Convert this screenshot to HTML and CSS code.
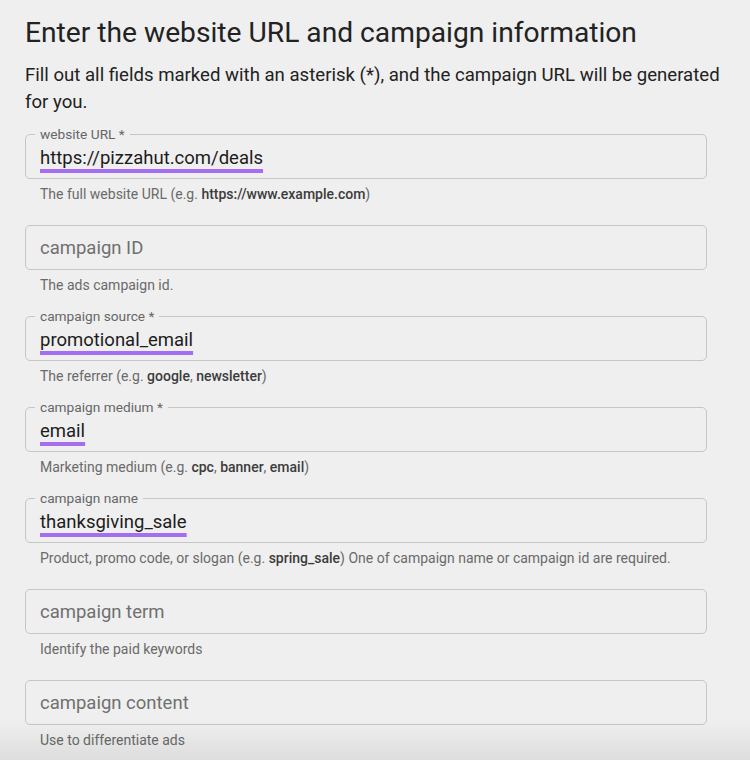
FILE: index.html
```html
<!DOCTYPE html>
<html lang="en">
<head>
    <meta charset="UTF-8">
    <meta name="viewport" content="width=device-width, initial-scale=1.0">
    <title>Campaign URL Builder</title>
    <link rel="stylesheet" href="styles.css">
</head>
<body>

<div class="builder">
    <h2>Enter the website URL and campaign information</h2>
    <p class="intro">Fill out all fields marked with an asterisk (*), and the campaign URL will be generated for you.</p>

    <div class="field">
        <div class="box filled">
            <span class="label">website URL *</span>
            <span class="value">https://pizzahut.com/deals</span>
        </div>
        <div class="help">The full website URL (e.g. <b>https://www.example.com</b>)</div>
    </div>

    <div class="field">
        <div class="box">
            <span class="placeholder">campaign ID</span>
        </div>
        <div class="help">The ads campaign id.</div>
    </div>

    <div class="field">
        <div class="box filled">
            <span class="label">campaign source *</span>
            <span class="value">promotional_email</span>
        </div>
        <div class="help">The referrer (e.g. <b>google</b>, <b>newsletter</b>)</div>
    </div>

    <div class="field">
        <div class="box filled">
            <span class="label">campaign medium *</span>
            <span class="value">email</span>
        </div>
        <div class="help">Marketing medium (e.g. <b>cpc</b>, <b>banner</b>, <b>email</b>)</div>
    </div>

    <div class="field">
        <div class="box filled">
            <span class="label">campaign name</span>
            <span class="value">thanksgiving_sale</span>
        </div>
        <div class="help">Product, promo code, or slogan (e.g. <b>spring_sale</b>) One of campaign name or campaign id are required.</div>
    </div>

    <div class="field">
        <div class="box">
            <span class="placeholder">campaign term</span>
        </div>
        <div class="help">Identify the paid keywords</div>
    </div>

    <div class="field">
        <div class="box">
            <span class="placeholder">campaign content</span>
        </div>
        <div class="help">Use to differentiate ads</div>
    </div>
</div>

</body>
</html>
```

FILE: styles.css
```css
body {
    margin: 0;
    padding: 0;
    background-color: #efefef;
    color: #212121;
    font-family: Roboto, "Liberation Sans", sans-serif;
    height: 760px;
    overflow: hidden;
}

/* darker band at the bottom edge of the screenshot */
body::after {
    content: "";
    position: fixed;
    left: 0;
    right: 0;
    bottom: 0;
    height: 40px;
    background: linear-gradient(to bottom, rgba(0, 0, 0, 0), rgba(0, 0, 0, 0.07));
    pointer-events: none;
}

.builder {
    width: 705px;
    padding: 15px 0 0 25px;
}

h2 {
    margin: 0;
    font-size: 28.2px;
    font-weight: 400;
    line-height: 36px;
    color: #222;
}

.intro {
    margin: 11px 0 18px;
    font-size: 18.6px;
    line-height: 27px;
    color: #222;
}

.field {
    width: 682px;
    height: 91px;
}

.box {
    position: relative;
    height: 43px;
    border: 1px solid #c6c6c6;
    border-radius: 5px;
    display: flex;
    align-items: center;
    padding: 0 14px;
}

.label {
    position: absolute;
    top: -9px;
    left: 9px;
    padding: 0 5px;
    background-color: #efefef;
    font-size: 13.7px;
    line-height: 16px;
    color: #666;
}

.value {
    font-size: 18.5px;
    color: #1c1c1c;
    margin-top: 3px;
    text-decoration: underline;
    text-decoration-color: #a56ef0;
    text-decoration-thickness: 4px;
    text-underline-offset: 5px;
    text-decoration-skip-ink: none;
}

.placeholder {
    font-size: 18.5px;
    color: #707070;
}

.help {
    margin-top: 7px;
    padding-left: 15px;
    font-size: 14px;
    line-height: 16px;
    color: #6a6a6a;
}

.help b {
    font-weight: 500;
    color: #3c3c3c;
}
```
